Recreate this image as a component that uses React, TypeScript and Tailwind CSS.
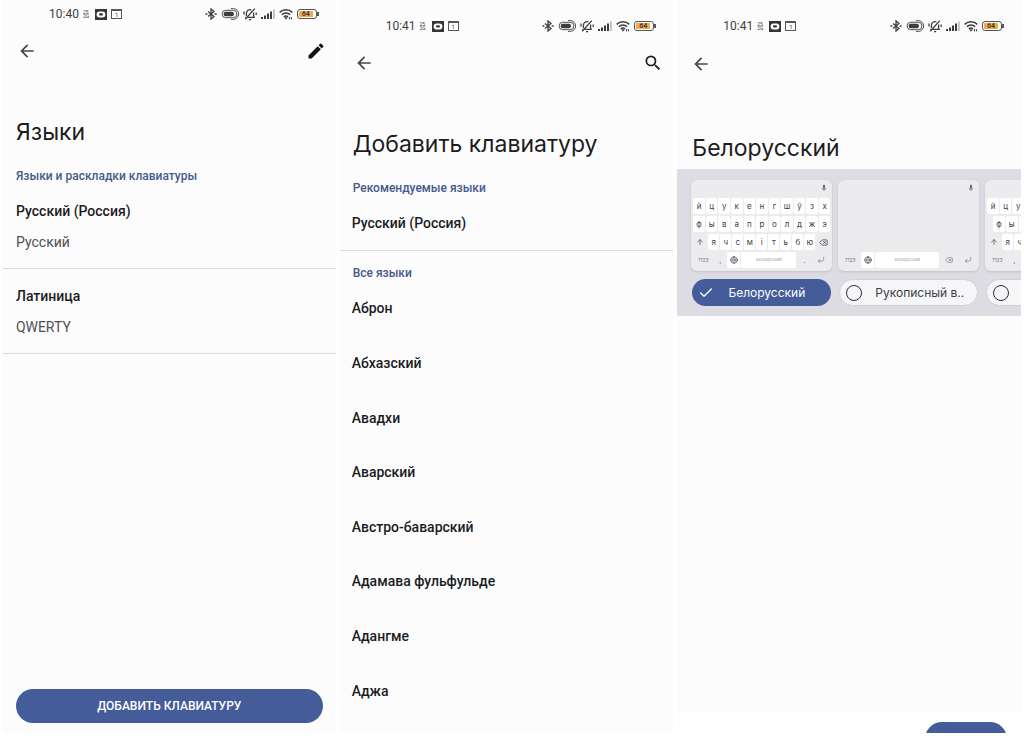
import React, { useState } from 'react';
import clsx from 'clsx';
import { ArrowUp, Check, CornerDownLeft, Delete, Globe } from 'lucide-react';
import { MdArrowBack, MdEdit, MdMic, MdSearch } from 'react-icons/md';

const languages = [
  'Аброн',
  'Абхазский',
  'Авадхи',
  'Аварский',
  'Австро-баварский',
  'Адамава фульфульде',
  'Адангме',
  'Аджа',
];

const installed = [
  { name: 'Русский (Россия)', layout: 'Русский' },
  { name: 'Латиница', layout: 'QWERTY' },
];

const layouts = [
  { id: 'belarusian', label: 'Белорусский' },
  { id: 'handwriting', label: 'Рукописный в..' },
  { id: 'compact', label: 'Белорусский' },
];

const BluetoothIcon = () => (
  <svg viewBox="0 0 12 12" className="h-3 w-3" fill="none" stroke="currentColor" strokeWidth="1.3">
    <path d="M3 3.5 9 8.5 6 11V1l3 2.5-6 5" />
    <path d="M.4 6h2M9.6 6h2" strokeWidth="1.7" />
  </svg>
);

const CapsuleIcon = () => (
  <svg viewBox="0 0 18 12" className="h-3 w-[18px]" fill="none" stroke="currentColor">
    <rect x="2.6" y="3.8" width="10.4" height="4.4" rx="2.2" fill="currentColor" stroke="none" />
    <path d="M4.8 2.3h7.4a3.7 3.7 0 0 1 0 7.4H4.8a3.7 3.7 0 0 1 0-7.4z" strokeWidth=".9" />
    <path d="M10 .6h2.2a5.4 5.4 0 0 1 0 10.8H10" strokeWidth=".9" />
  </svg>
);

const MutedBellIcon = () => (
  <svg viewBox="0 0 14 14" className="h-3.5 w-3.5" fill="none" stroke="currentColor" strokeWidth="1.3">
    <path d="M3.4 9V6.3a3.6 3.6 0 0 1 5-3.3M10.6 5.6v4.8H4.2M2.4 10.4h.8M10.6 10.4h1.2" />
    <path d="M6 12.6h2.2M2.2 12.2 11.8 1.6" />
    <path d="M1 4.6v3M13.2 5.4v2.6" />
  </svg>
);

const SignalIcon = () => (
  <svg viewBox="0 0 14 12" className="h-3 w-3.5" fill="currentColor">
    <rect x="0" y="9" width="2" height="2" />
    <rect x="3" y="7.5" width="2" height="3.5" />
    <rect x="6" y="5.5" width="2" height="5.5" />
    <rect x="9" y="3.5" width="2" height="7.5" />
    <rect x="12.2" y="1.5" width="1.4" height="9.5" opacity=".4" />
  </svg>
);

const WifiIcon = () => (
  <svg viewBox="0 0 14 12" className="h-3 w-3.5" fill="none" stroke="currentColor" strokeWidth="1.5">
    <path d="M.7 4.4a9 9 0 0 1 12.6 0M2.8 6.8a6 6 0 0 1 8.4 0M4.8 9a3.2 3.2 0 0 1 4.2-.2" />
    <path d="m5.8 9.8 1.2 1.4 1.2-1.4z" strokeWidth=".9" />
    <path d="M10.4 9v2.4M12.4 9v2.4" strokeWidth="1" />
  </svg>
);

const StatusBar = ({ time }: { time: string }) => (
  <div className="flex h-4 items-center justify-between pl-[46px] pr-[17px] text-[#3c3d40]">
    <div className="flex items-center gap-1">
      <span className="font-[Roboto,sans-serif] text-[12px] leading-4">{time}</span>
      <span className="flex flex-col font-[Roboto,sans-serif] text-[5px] leading-[4px]">
        <span>25</span>
        <span>2G</span>
      </span>
      <svg viewBox="0 0 12 11" className="ml-0.5 h-[11px] w-3">
        <rect width="12" height="11" fill="#343538" />
        <rect x="1.6" y="2.6" width="8.8" height="5.8" rx="2.9" fill="#fff" />
        <rect x="4" y="4.3" width="4" height="2.3" rx="1.1" fill="#343538" />
      </svg>
      <span className="flex h-[10px] w-[11px] items-center justify-center border border-t-2 border-[#55565a] font-[Roboto,sans-serif] text-[6px] leading-[6px]">
        1
      </span>
    </div>
    <div className="flex items-center gap-1">
      <BluetoothIcon />
      <CapsuleIcon />
      <MutedBellIcon />
      <SignalIcon />
      <WifiIcon />
      <span className="flex items-center">
        <span className="flex h-[10px] w-5 rounded-[3px] border border-[#55565a] p-px">
          <span className="flex w-3.5 items-center justify-center rounded-[1px] bg-[#f3ac45] font-[Roboto,sans-serif] text-[7px] font-bold leading-[6px]">
            64
          </span>
        </span>
        <span className="h-1 w-0.5 bg-[#55565a]" />
      </span>
    </div>
  </div>
);

interface ScreenProps {
  time: string;
  title: string;
  className?: string;
  barClass?: string;
  titleClass?: string;
  action?: React.ReactNode;
  children: React.ReactNode;
}

const Screen: React.FC<ScreenProps> = ({ time, title, className, barClass, titleClass, action, children }) => (
  <section className={clsx('flex min-w-0 flex-col overflow-hidden bg-[#fcfcfd]', className)}>
    <StatusBar time={time} />
    <div className={clsx('flex h-6 items-center justify-between pl-3.5 pr-2.5', barClass)}>
      <button type="button" aria-label="Назад">
        <MdArrowBack className="h-5 w-5 text-[#45464a]" />
      </button>
      {action}
    </div>
    <h1 className={clsx('text-[23px] leading-8 text-[#1c1c1f]', titleClass)}>{title}</h1>
    {children}
  </section>
);

const SectionLabel = ({ className, children }: { className: string; children: React.ReactNode }) => (
  <h2 className={clsx('px-[13px] font-[Roboto,sans-serif] text-[12px] font-medium leading-4 text-[#455a8c]', className)}>
    {children}
  </h2>
);

const KeyRow = ({ keys }: { keys: string }) => (
  <>
    {keys.split('').map((key) => (
      <span key={key} className="flex h-4 flex-1 items-center justify-center rounded-[2px] bg-white">
        {key}
      </span>
    ))}
  </>
);

const KeyboardPreview = ({ id }: { id: string }) => {
  const handwriting = id === 'handwriting';

  return (
    <div className="flex h-[91px] flex-col gap-0.5 rounded-md bg-[#ececee] px-0.5 pb-[3px] text-[8px] leading-4 text-[#3f4044] shadow-sm">
      <div className="flex h-4 items-center justify-end pr-0.5">
        <MdMic className="h-2 w-2 text-[#66676b]" />
      </div>
      {handwriting ? (
        <div className="flex-1" />
      ) : (
        <>
          <div className="flex gap-px">
            <KeyRow keys="йцукенгшўзх" />
          </div>
          <div className={clsx('flex gap-px', id === 'compact' && 'px-1.5')}>
            <KeyRow keys={id === 'compact' ? 'фывапролдж' : 'фывапролджэ'} />
          </div>
          <div className="flex gap-px">
            <span className="flex w-3.5 items-center justify-center">
              <ArrowUp className="h-2 w-2" />
            </span>
            <KeyRow keys="ячсмітьбю" />
            <span className="flex w-3.5 items-center justify-center">
              <Delete className="h-[9px] w-[9px]" />
            </span>
          </div>
        </>
      )}
      <div className="flex h-4 items-center gap-px text-[#77787c]">
        <span className="w-5 text-center text-[5px]">?123</span>
        {!handwriting && <span className="w-3 text-center">,</span>}
        <span className="flex h-4 w-[13px] items-center justify-center rounded-[2px] bg-white">
          <Globe className="h-2 w-2 text-[#4b4c50]" />
        </span>
        <span className="flex h-4 flex-1 items-center justify-center rounded-[2px] bg-white text-[4px] text-[#9a9b9f]">
          Белорусский
        </span>
        {handwriting ? (
          <span className="flex w-[18px] items-center justify-center">
            <Delete className="h-2 w-2" />
          </span>
        ) : (
          <span className="w-3.5 text-center">.</span>
        )}
        <span className="flex w-[18px] items-center justify-center">
          <CornerDownLeft className="h-2 w-2" />
        </span>
      </div>
    </div>
  );
};

const App: React.FC = () => {
  const [selected, setSelected] = useState('belarusian');

  return (
    <main className="grid h-screen min-h-[640px] grid-cols-[333fr_334fr_344fr] gap-1 bg-white px-[3px] pb-[3px] font-[Inter,sans-serif]">
      <Screen
        time="10:40"
        title="Языки"
        className="pt-1.5"
        barClass="mt-[17px]"
        titleClass="mt-[53px] px-[13px]"
        action={
          <button type="button" aria-label="Изменить">
            <MdEdit className="h-5 w-5 text-[#141416]" />
          </button>
        }
      >
        <SectionLabel className="mt-5">Языки и раскладки клавиатуры</SectionLabel>
        <ul>
          {installed.map((item) => (
            <li key={item.name} className="border-b border-[#d9d9dc]">
              <button type="button" className="flex w-full flex-col gap-[11px] px-[13px] pb-4 pt-[17px] text-left font-[Roboto,sans-serif] text-[14px] leading-5">
                <span className="font-medium text-[#1c1c1f]">{item.name}</span>
                <span className="text-[#505155]">{item.layout}</span>
              </button>
            </li>
          ))}
        </ul>
        <button
          type="button"
          className="mx-[13px] mb-2.5 mt-auto h-[34px] rounded-full bg-[#445c99] font-[Roboto,sans-serif] text-[12px] font-medium text-white"
        >
          ДОБАВИТЬ КЛАВИАТУРУ
        </button>
      </Screen>

      <Screen
        time="10:41"
        title="Добавить клавиатуру"
        className="pt-[18px]"
        barClass="mt-[17px]"
        titleClass="mt-[53px] px-[13px]"
        action={
          <button type="button" aria-label="Поиск">
            <MdSearch className="h-5 w-5 text-[#1c1c1f]" />
          </button>
        }
      >
        <SectionLabel className="mt-5">Рекомендуемые языки</SectionLabel>
        <button
          type="button"
          className="border-b border-[#d9d9dc] px-3 pb-[17px] pt-[17px] text-left font-[Roboto,sans-serif] text-[14px] font-medium leading-5 text-[#1c1c1f]"
        >
          Русский (Россия)
        </button>
        <SectionLabel className="mt-3.5">Все языки</SectionLabel>
        <ul className="flex flex-1 flex-col pb-[15px]">
          {languages.map((language) => (
            <li key={language} className="flex flex-1">
              <button type="button" className="w-full px-3 text-left font-[Roboto,sans-serif] text-[14px] font-medium leading-5 text-[#1c1c1f]">
                {language}
              </button>
            </li>
          ))}
        </ul>
      </Screen>

      <Screen
        time="10:41"
        title="Белорусский"
        className="pt-[18px]"
        barClass="mt-[18px]"
        titleClass="mt-[56px] px-[15px]"
      >
        {/* Layout picker */}
        <div className="mt-[5px] flex gap-1.5 overflow-hidden bg-[#dcdce2] pb-2.5 pl-3.5 pt-[11px]">
          {layouts.map((layout) => {
            const active = selected === layout.id;
            return (
              <label key={layout.id} className="flex w-[141px] shrink-0 cursor-pointer flex-col gap-2">
                <KeyboardPreview id={layout.id} />
                <span
                  className={clsx(
                    'mx-px flex h-[27px] items-center rounded-full pl-1.5 text-[12px]',
                    active ? 'bg-[#445c99] pr-3 text-white' : 'border border-[#d0d0d5] bg-[#f6f6f8] text-[#404145]'
                  )}
                >
                  <input
                    type="radio"
                    name="layout"
                    checked={active}
                    onChange={() => setSelected(layout.id)}
                    className={clsx(
                      'h-4 w-4 shrink-0 appearance-none rounded-full',
                      active ? 'hidden' : 'border border-[#2c2d30]'
                    )}
                  />
                  {active && <Check className="h-4 w-4 shrink-0" strokeWidth={2} />}
                  <span className="flex-1 whitespace-nowrap text-center">{layout.label}</span>
                </span>
              </label>
            );
          })}
        </div>
        <div className="mt-auto flex h-[21px] justify-end overflow-hidden bg-white pr-3.5 pt-2.5">
          <button type="button" aria-label="Готово" className="h-[34px] w-[82px] shrink-0 rounded-full bg-[#445c99]" />
        </div>
      </Screen>
    </main>
  );
};

export default App;
